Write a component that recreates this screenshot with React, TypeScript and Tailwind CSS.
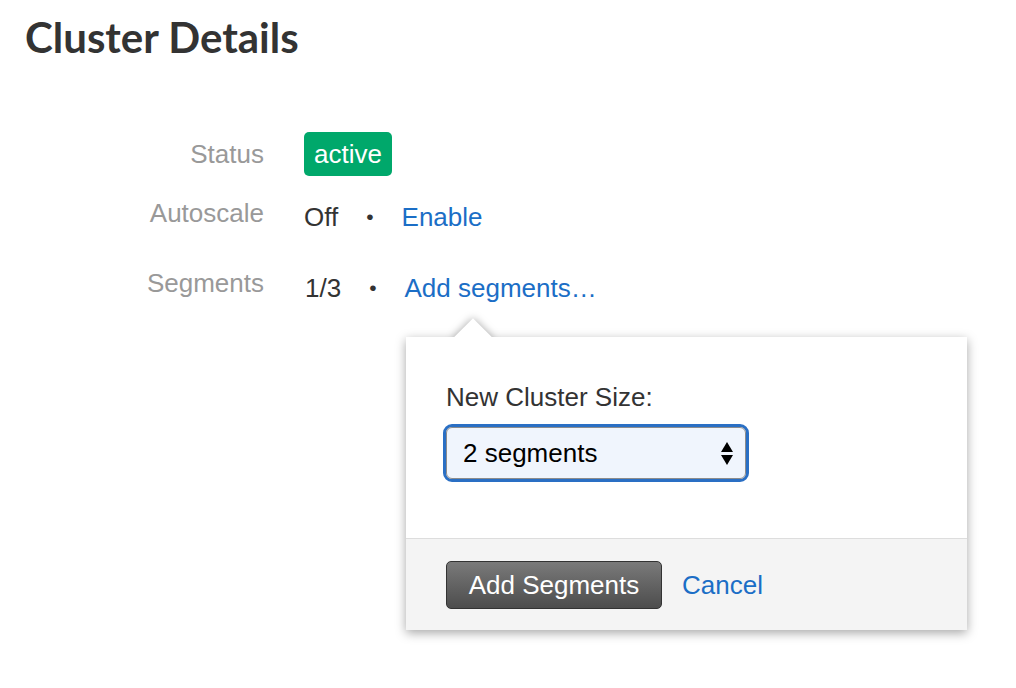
import React from "react";

export default function App() {
  return (
    <div className="relative w-[1016px] h-[688px] overflow-hidden bg-white font-['Liberation_Sans',Arial,sans-serif] text-[26px] leading-[30px] text-[#333]">
      <div className="pl-[25px] pt-[16px]">
        <h1 className="font-['Lato',sans-serif] font-bold text-[42px] leading-[42px] text-[#333]">
          Cluster Details
        </h1>
      </div>

      <div className="mt-[74px] flex flex-col">
        {/* Status */}
        <div className="flex items-center">
          <div className="w-[264px] text-right text-[#999]">Status</div>
          <div className="ml-[40px] rounded-[5px] bg-[#00a86b] px-[10px] py-[7px] text-white">active</div>
        </div>
        {/* Autoscale */}
        <div className="mt-[22px] flex items-start">
          <div className="w-[264px] text-right text-[#999]">Autoscale</div>
          <div className="ml-[40px] flex items-center pt-[4px]">
            <span>Off</span>
            <span className="mx-[28px] text-[21px] text-[#333]">•</span>
            <span className="text-[#1b6ec6]">Enable</span>
          </div>
        </div>
        {/* Segments */}
        <div className="mt-[36px] flex items-start">
          <div className="w-[264px] text-right text-[#999]">Segments</div>
          <div className="ml-[41px] flex items-center pt-[5px]">
            <span>1/3</span>
            <span className="mx-[28px] text-[21px] text-[#333]">•</span>
            <span className="text-[#1b6ec6]">Add segments…</span>
          </div>
        </div>
      </div>

      {/* Popover */}
      <div className="absolute left-[406px] top-[337px] w-[561px] bg-white shadow-[0_3px_10px_rgba(0,0,0,0.35)]">
        <div className="h-[201px] px-[40px] pt-[45px]">
          <div className="text-[#333]">New Cluster Size:</div>
          <div className="mt-[12px] ml-[-3px] w-[306px] rounded-[9px] border-[3px] border-[#2a6fc4]">
            <div className="flex h-[52px] items-center justify-between rounded-[6px] border border-[#8c8c8c] bg-[#f0f5fd] pl-[16px] pr-[12px] text-black">
              <span>2 segments</span>
              <svg width="12" height="24" viewBox="0 0 12 24" className="mt-[1px]">
                <polygon points="6,0 12,10 0,10" fill="#000" />
                <polygon points="0,13 12,13 6,23" fill="#000" />
              </svg>
            </div>
          </div>
        </div>
        <div className="flex h-[92px] items-center border-t border-[#dddddd] bg-[#f4f4f4] pl-[40px]">
          <button className="h-[48px] w-[216px] rounded-[5px] border border-[#333] bg-gradient-to-b from-[#7a7a7a] to-[#4d4d4d] leading-[30px] text-white">
            Add Segments
          </button>
          <span className="ml-[20px] text-[#1b6ec6]">Cancel</span>
        </div>
      </div>

      {/* Arrow */}
      <div className="absolute left-[433px] top-[305px] h-[32px] w-[80px] overflow-hidden">
        <div className="absolute left-[26px] top-[19px] h-[28px] w-[28px] rotate-45 bg-white shadow-[0_0_8px_rgba(0,0,0,0.35)]" />
      </div>
    </div>
  );
}
